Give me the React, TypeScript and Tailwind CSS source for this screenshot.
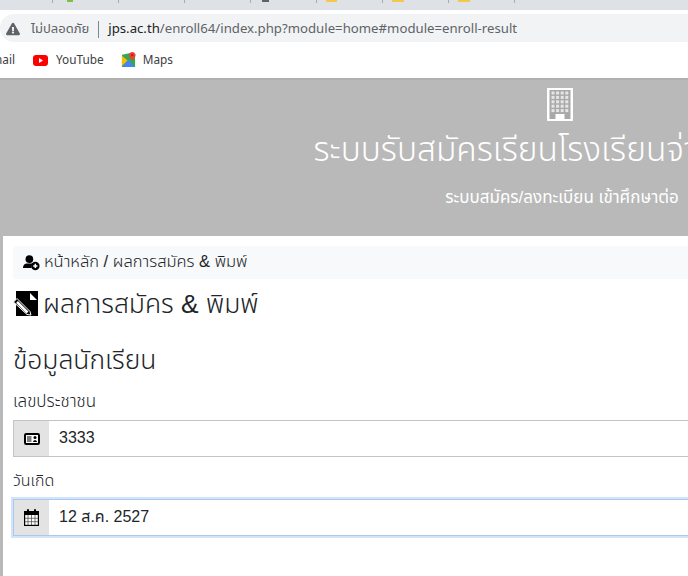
import React from "react";
import { FaExclamationTriangle } from "react-icons/fa";

const thai = "font-['Liberation_Sans','Noto_Sans_Thai','Noto_Sans',sans-serif]";
const tabs = [
  { w: "w-[53px]", mark: "" },
  { w: "w-[66px]", mark: "ml-[14px] w-[6px] bg-[#7ac143]" },
  { w: "w-[66px]", mark: "" },
  { w: "w-[66px]", mark: "" },
  { w: "w-[66px]", mark: "ml-[11px] w-[7px] bg-[#5f6368]" },
  { w: "w-[66px]", mark: "ml-[9px] w-[11px] bg-[#f2c94c]" },
  { w: "w-[66px]", mark: "ml-[9px] w-[12px] bg-[#f2c94c]" },
  { w: "w-[66px]", mark: "ml-[9px] w-[12px] bg-[#f2c94c]" },
];

function YoutubeIcon() {
  return (
    <svg width="15" height="11" viewBox="0 0 15 11">
      <rect width="15" height="11" rx="3" fill="#f00" />
      <path d="M6 3 L10 5.5 L6 8 Z" fill="#fff" />
    </svg>
  );
}

function MapsIcon() {
  return (
    <svg width="15" height="16" viewBox="0 0 16 17">
      <path d="M1 3 L10 1 L15 3 V16 L1 16 Z" fill="#34a853" />
      <path d="M1 16 L8 8 L14 16 Z" fill="#4285f4" />
      <path d="M1 4 L7 9 L1 15 Z" fill="#fbbc04" />
      <path d="M12 0 C9.8 0 8.5 1.6 8.5 3.4 C8.5 5.6 12 9 12 9 C12 9 15.5 5.6 15.5 3.4 C15.5 1.6 14.2 0 12 0 Z" fill="#ea4335" />
      <circle cx="12" cy="3.4" r="1.2" fill="#a52714" />
    </svg>
  );
}

function BuildingIcon() {
  const cells = [];
  for (let r = 0; r < 5; r++) {
    for (let c = 0; c < 4; c++) {
      cells.push(<rect key={r + "-" + c} x={4.5 + c * 4.6} y={3.5 + r * 4.4} width="3" height="3" fill="#e6e6e6" />);
    }
  }
  return (
    <svg width="26" height="33" viewBox="0 0 26 33">
      <rect width="26" height="33" fill="#fff" />
      <rect x="2.5" y="2" width="21" height="29" fill="#a9a9a9" />
      {cells}
      <rect x="8.5" y="26" width="9" height="7" fill="#fff" />
    </svg>
  );
}

function UserPlusIcon() {
  return (
    <svg width="17" height="16" viewBox="0 0 20 18">
      <circle cx="7.5" cy="4.5" r="4.5" fill="#000" />
      <path d="M0 15 C0 11 2.5 9.5 5 9.5 H10 C11 9.5 11.5 9.7 12 10 C10 11.5 9.5 13.5 10 15 Z" fill="#000" />
      <circle cx="14.5" cy="12.5" r="5" fill="#000" />
      <path d="M14.5 10 V15 M12 12.5 H17" stroke="#fff" strokeWidth="1.8" />
    </svg>
  );
}

function FileEditIcon() {
  return (
    <svg width="26" height="26" viewBox="0 0 26 26">
      <path d="M3 0 H25 V25 H3 Z" fill="#000" />
      <path d="M17 2 L24 9 H17 Z" fill="#fff" />
      {/* pencil, sticking out of the page on the left */}
      <path d="M0.5 11 L4 7.5 L17 20.5 L18 24 L14 23.5 Z" fill="#000" stroke="#fff" strokeWidth="1" />
      <path d="M4 11 L14.5 21.5" stroke="#fff" strokeWidth="2.6" />
    </svg>
  );
}

function IdCardIcon() {
  return (
    <svg width="16" height="12" viewBox="0 0 16 12">
      <rect x="1" y="1" width="14" height="10" rx="1.2" fill="#fff" stroke="#000" strokeWidth="2" />
      <path d="M3 4 H7.5 M3 6 H7.5 M3 8 H7.5" stroke="#000" strokeWidth="1.1" />
      <circle cx="11" cy="4.5" r="1.5" fill="#000" />
      <path d="M9 9 C9 6.5 13 6.5 13 9 Z" fill="#000" />
    </svg>
  );
}

function CalendarIcon() {
  return (
    <svg width="15" height="17" viewBox="0 0 15 17">
      <rect x="0.6" y="2.6" width="13.8" height="13.8" fill="#fff" stroke="#000" strokeWidth="1.2" />
      <rect x="0" y="2" width="15" height="4" fill="#000" />
      <rect x="3" y="0" width="2" height="4" rx="1" fill="#000" />
      <rect x="10" y="0" width="2" height="4" rx="1" fill="#000" />
      <path d="M4 6 V16 M7.5 6 V16 M11 6 V16 M1 9.3 H14 M1 12.7 H14" stroke="#555" strokeWidth="0.8" />
    </svg>
  );
}

export default function App() {
  return (
    <div className={"w-[688px] h-[576px] overflow-hidden bg-white text-[#212529] " + thai}>
      {/* browser chrome */}
      <div className="h-[10px] bg-[#dee1e6] flex">
        {tabs.map((t, i) => (
          <div key={i} className={t.w + " h-[3px] border-r border-[#a9acb1] shrink-0"}>
            {t.mark && <div className={"h-[2px] " + t.mark} />}
          </div>
        ))}
      </div>
      <div className="h-[32px] pt-[4px] bg-white">
        <div className="h-[28px] pt-[2px] bg-[#f1f3f4] rounded-l-[14px] flex items-center pl-[6px] whitespace-nowrap font-['Noto_Sans','Noto_Sans_Thai',sans-serif]">
          <FaExclamationTriangle className="text-[#5f6368] text-[14px] shrink-0" />
          <span className="ml-[11px] text-[13px] text-[#5f6368]">ไม่ปลอดภัย</span>
          <span className="mx-[9px] w-px h-[17px] bg-[#80868b]" />
          <span className="text-[13.2px] text-[#202124]">jps.ac.th</span>
          <span className="text-[13.2px] text-[#5f6368]">/enroll64/index.php?module=home#module=enroll-result</span>
        </div>
      </div>
      <div className="h-[36px] bg-white flex items-center text-[11.8px] text-[#3c4043] whitespace-nowrap font-['Noto_Sans',sans-serif]">
        <span className="w-[15px] shrink-0 overflow-hidden flex justify-end">Gmail</span>
        <span className="ml-[18px]"><YoutubeIcon /></span>
        <span className="ml-[8px]">YouTube</span>
        <span className="ml-[17px]"><MapsIcon /></span>
        <span className="ml-[7px]">Maps</span>
      </div>

      {/* page */}
      <div className="bg-[#b9b9b9] border-t-2 border-[#b0b0b0] h-[158px] w-[1124px] flex flex-col items-center text-white">
        <div className="mt-[8px] mr-[4px]"><BuildingIcon /></div>
        <div className="mt-[5px] mr-[26px] text-[33.5px] leading-[48px] font-light whitespace-nowrap">ระบบรับสมัครเรียนโรงเรียนจ่าอากาศ</div>
        <div className="mt-[12px] text-[17px] leading-[24px] whitespace-nowrap">ระบบสมัคร/ลงทะเบียน เข้าศึกษาต่อ</div>
      </div>
      <div className="border-l-[3px] border-[#b9b9b9] h-[340px] pl-[10px] pt-[10px]">
        <div className="h-[33px] bg-[#f8f9fa] rounded-l-[4px] flex items-center pl-[10px] text-[16.5px] font-light">
          <span className="mr-[4px]"><UserPlusIcon /></span>
          <span className="-translate-y-[1px]">หน้าหลัก / ผลการสมัคร &amp; พิมพ์</span>
        </div>
        <h2 className="mt-[4px] h-[42px] flex items-center text-[26.4px] leading-[42px] font-light">
          <span className="mr-[4px]"><FileEditIcon /></span>
          <span>ผลการสมัคร &amp; พิมพ์</span>
        </h2>
        <h3 className="mt-[14px] text-[26.4px] leading-[42px] font-light">ข้อมูลนักเรียน</h3>
        <div className="mt-[9px] text-[17px] leading-[24px] font-light">เลขประชาชน</div>
        <div className="mt-[6px] h-[37px] w-[800px] flex border border-[#c4c4c4]">
          <div className="w-[35px] bg-[#e3e3e3] flex items-center justify-center">
            <IdCardIcon />
          </div>
          <div className="pl-[10px] pb-[2px] flex items-center text-[16px]">3333</div>
        </div>
        <div className="mt-[12px] text-[16px] leading-[24px] font-light">วันเกิด</div>
        <div className="mt-[6px] h-[37px] w-[800px] flex border border-[#a9c9ee] shadow-[0_0_0_2px_rgba(180,210,245,0.6)]">
          <div className="w-[35px] bg-[#e3e3e3] flex items-center justify-center">
            <CalendarIcon />
          </div>
          <div className="pl-[10px] pb-[2px] flex items-center text-[16px]">12 ส.ค. 2527</div>
        </div>
      </div>
    </div>
  );
}
